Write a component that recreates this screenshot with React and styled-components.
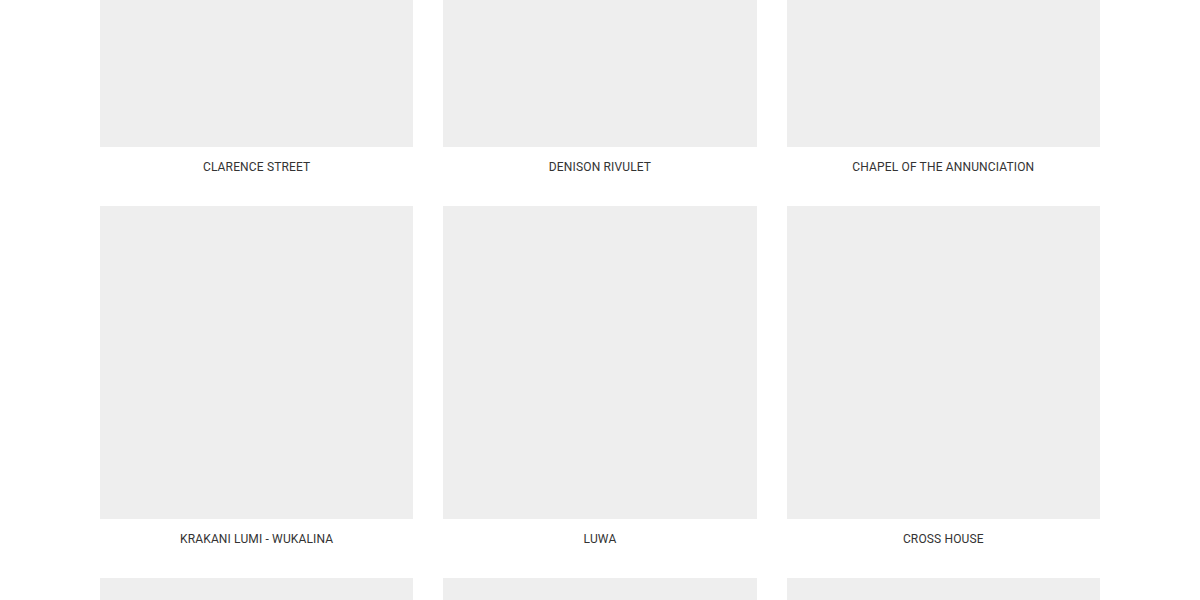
import React from "react"
import styled, { createGlobalStyle } from "styled-components"

const projects = [
  "Clarence Street",
  "Denison Rivulet",
  "Chapel of the Annunciation",
  "Krakani Lumi - wukalina",
  "Luwa",
  "Cross House",
  "Kingston Residence",
  "Bruny Island Shack",
  "Salamanca Studio",
]

const App = () => (
  <>
    <GlobalStyle />
    <Page>
      <Grid>
        {projects.map((name) => (
          <Card key={name}>
            <Thumb />
            <Caption>{name}</Caption>
          </Card>
        ))}
      </Grid>
    </Page>
  </>
)

export default App

const GlobalStyle = createGlobalStyle`
  html, body {
    margin: 0;
    padding: 0;
    background: #fff;
    overflow: hidden;
  }
`

const Page = styled.div`
  width: 1000px;
  margin: 0 auto;
  height: 600px;
  overflow: hidden;
`

const Grid = styled.div`
  display: grid;
  grid-template-columns: repeat(3, 1fr);
  column-gap: 30px;
  margin-top: -166px;
`

const Card = styled.a`
  display: flex;
  flex-direction: column;
  text-decoration: none;
  margin-bottom: 28.67px;
`

const Thumb = styled.div`
  aspect-ratio: 1 / 1;
  background: #eeeeee;
`

const Caption = styled.h3`
  margin: 10px 0 0;
  font-family: Roboto, "Liberation Sans", sans-serif;
  font-size: 12px;
  font-weight: 400;
  line-height: 20px;
  letter-spacing: 0.15px;
  text-transform: uppercase;
  text-align: center;
  color: #333;
`
